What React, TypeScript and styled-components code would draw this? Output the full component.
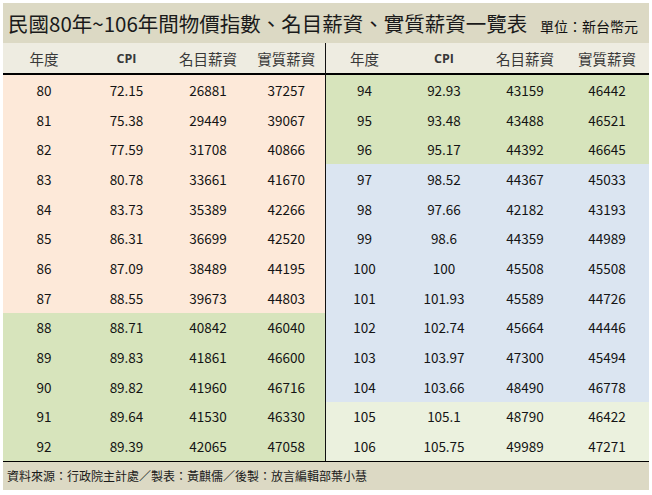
import React from "react";
import styled, { createGlobalStyle } from "styled-components";

const Global = createGlobalStyle`
  html, body { margin: 0; padding: 0; background: #ffffff; }
  body { font-family: "Noto Sans CJK TC", "Noto Sans", sans-serif; }
`;

const Frame = styled.div`
  width: 646px;
  margin: 3px;
  display: flex;
  flex-direction: column;
`;

const TitleBar = styled.div`
  height: 40px;
  background: #dcd9c4;
  display: flex;
  align-items: baseline;
  justify-content: space-between;
  padding: 0 11px 0 5px;
  line-height: 40px;
  color: #1a1a1a;
`;

const Title = styled.div`
  font-size: 20.5px;
  font-weight: 400;
`;

const Unit = styled.div`
  font-size: 14px;
  color: #111;
`;

const Body = styled.div`
  display: flex;
`;

const Half = styled.div<{ $divider?: boolean }>`
  width: 323px;
  box-sizing: border-box;
  border-right: ${(p) => (p.$divider ? "1.5px solid #111" : "none")};
  display: flex;
  flex-direction: column;
`;

const HeaderRow = styled.div<{ $cols: string }>`
  display: grid;
  grid-template-columns: ${(p) => p.$cols};
  height: 30px;
  background: #eeece1;
  border-bottom: 2px solid #000;
  align-items: center;
`;

const HeadCell = styled.div<{ $latin?: boolean }>`
  text-align: center;
  color: #383838;
  font-size: ${(p) => (p.$latin ? "12.5px" : "14.5px")};
  font-weight: ${(p) => (p.$latin ? 700 : 400)};
  font-family: ${(p) =>
    p.$latin ? '"Open Sans", "Noto Sans", sans-serif' : '"Noto Sans CJK TC", sans-serif'};
`;

const Row = styled.div<{ $cols: string; $bg: string }>`
  display: grid;
  grid-template-columns: ${(p) => p.$cols};
  height: 29.7px;
  background: ${(p) => p.$bg};
  align-items: center;
`;

const Cell = styled.div`
  text-align: center;
  font-size: 13.5px;
  color: #141414;
  font-family: "Noto Sans CJK TC", "Noto Sans", sans-serif;
`;

const Footer = styled.div`
  height: 28px;
  border-top: 1.5px solid #000;
  background: #dcd9c4;
  display: flex;
  align-items: center;
  padding-left: 4px;
  font-size: 12px;
  color: #1a1a1a;
`;

const PEACH = "#fde9d9";
const GREEN = "#d7e4bc";
const BLUE = "#dbe5f1";
const LIGHT = "#ebf1de";

type R = [string, string, string, string, string];

const left: R[] = [
  ["80", "72.15", "26881", "37257", PEACH],
  ["81", "75.38", "29449", "39067", PEACH],
  ["82", "77.59", "31708", "40866", PEACH],
  ["83", "80.78", "33661", "41670", PEACH],
  ["84", "83.73", "35389", "42266", PEACH],
  ["85", "86.31", "36699", "42520", PEACH],
  ["86", "87.09", "38489", "44195", PEACH],
  ["87", "88.55", "39673", "44803", PEACH],
  ["88", "88.71", "40842", "46040", GREEN],
  ["89", "89.83", "41861", "46600", GREEN],
  ["90", "89.82", "41960", "46716", GREEN],
  ["91", "89.64", "41530", "46330", GREEN],
  ["92", "89.39", "42065", "47058", GREEN],
];

const right: R[] = [
  ["94", "92.93", "43159", "46442", GREEN],
  ["95", "93.48", "43488", "46521", GREEN],
  ["96", "95.17", "44392", "46645", GREEN],
  ["97", "98.52", "44367", "45033", BLUE],
  ["98", "97.66", "42182", "43193", BLUE],
  ["99", "98.6", "44359", "44989", BLUE],
  ["100", "100", "45508", "45508", BLUE],
  ["101", "101.93", "45589", "44726", BLUE],
  ["102", "102.74", "45664", "44446", BLUE],
  ["103", "103.97", "47300", "45494", BLUE],
  ["104", "103.66", "48490", "46778", BLUE],
  ["105", "105.1", "48790", "46422", LIGHT],
  ["106", "105.75", "49989", "47271", LIGHT],
];

const LEFT_COLS = "82px 83px 80px 76.5px";
const RIGHT_COLS = "77px 82px 80px 84px";

const TableHalf: React.FC<{ rows: R[]; cols: string; divider?: boolean }> = ({
  rows,
  cols,
  divider,
}) => (
  <Half $divider={divider}>
    <HeaderRow $cols={cols}>
      <HeadCell>年度</HeadCell>
      <HeadCell $latin>CPI</HeadCell>
      <HeadCell>名目薪資</HeadCell>
      <HeadCell>實質薪資</HeadCell>
    </HeaderRow>
    {rows.map((r) => (
      <Row key={r[0]} $cols={cols} $bg={r[4]}>
        <Cell>{r[0]}</Cell>
        <Cell>{r[1]}</Cell>
        <Cell>{r[2]}</Cell>
        <Cell>{r[3]}</Cell>
      </Row>
    ))}
  </Half>
);

export default function App() {
  return (
    <>
      <Global />
      <Frame>
        <TitleBar>
          <Title>民國80年~106年間物價指數、名目薪資、實質薪資一覽表</Title>
          <Unit>單位：新台幣元</Unit>
        </TitleBar>
        <Body>
          <TableHalf rows={left} cols={LEFT_COLS} divider />
          <TableHalf rows={right} cols={RIGHT_COLS} />
        </Body>
        <Footer>資料來源：行政院主計處／製表：黃麒儒／後製：放言編輯部葉小慧</Footer>
      </Frame>
    </>
  );
}
